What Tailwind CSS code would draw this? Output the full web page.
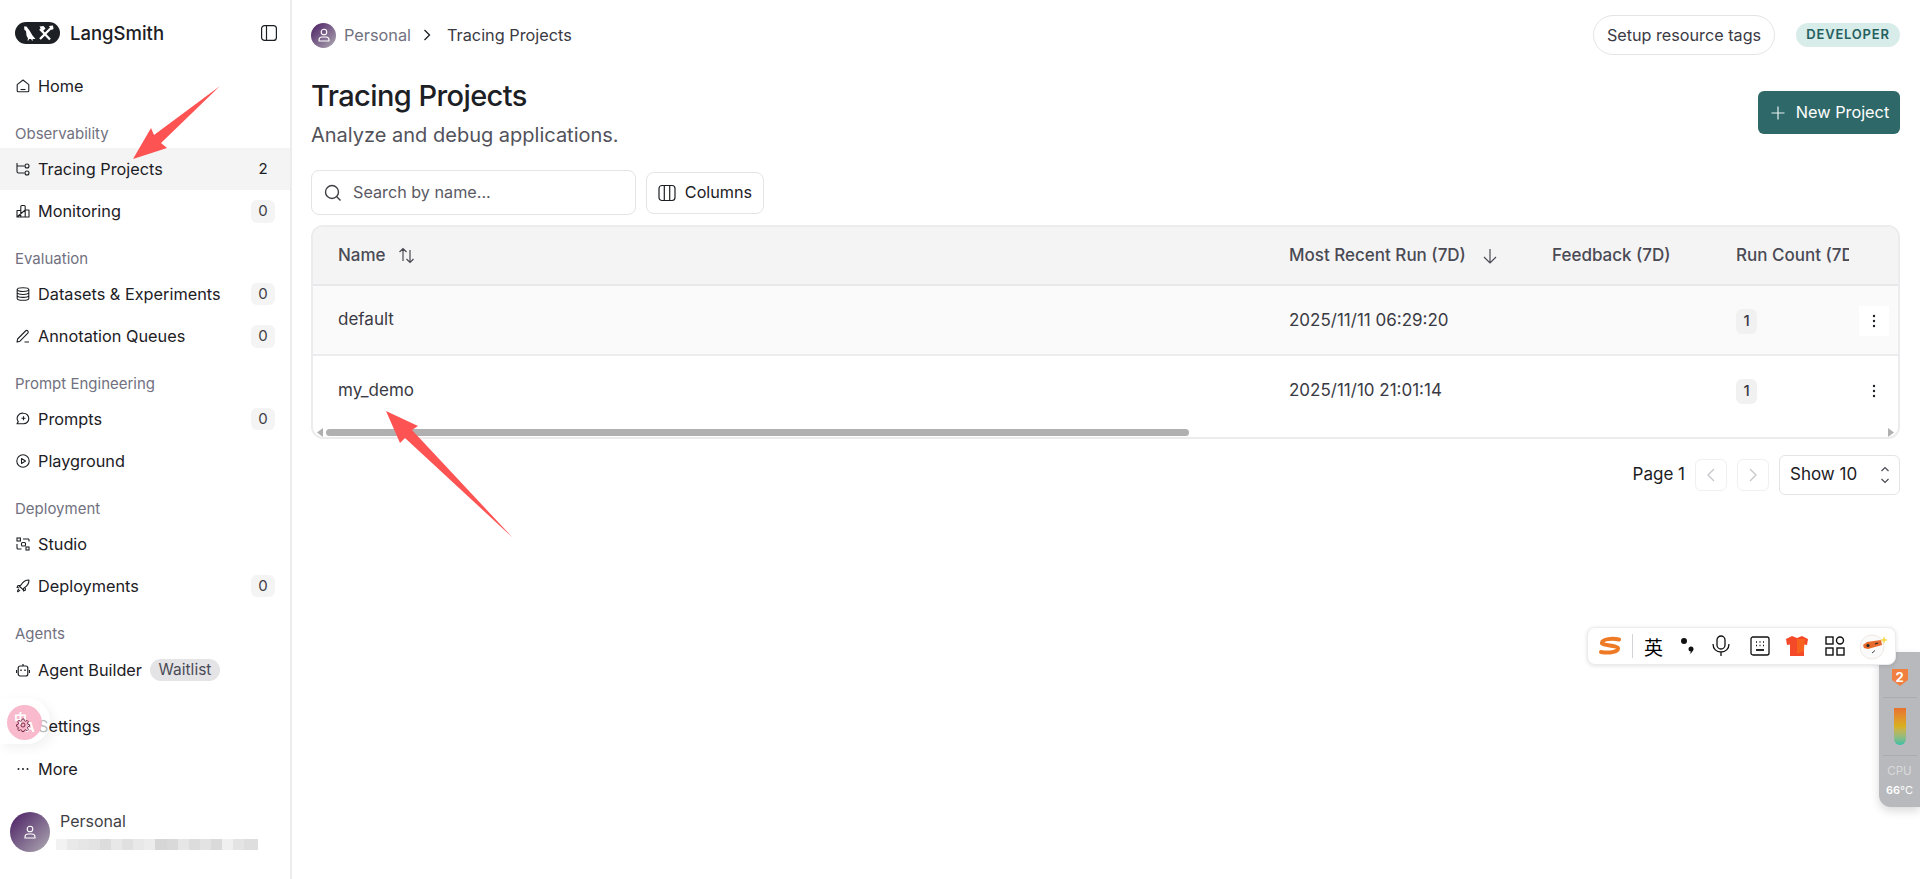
<!DOCTYPE html>
<html lang="en">
<head>
    <meta charset="UTF-8">
    <meta name="viewport" content="width=device-width, initial-scale=1.0">
    <title>LangSmith - Tracing Projects</title>
    <script src="https://cdn.jsdelivr.net/npm/@tailwindcss/browser@4"></script>
</head>
<body class="bg-white text-[#1c2024] font-['Inter','Liberation_Sans',sans-serif] overflow-hidden">
<div class="relative flex h-[879px] w-[1920px] overflow-hidden">

    <!-- Sidebar -->
    <aside class="w-[292px] shrink-0 h-full border-r-2 border-[#ececee] flex flex-col text-[16.3px] leading-5">
        <div class="h-[65px] flex items-center pl-[15px] pr-[13px]">
            <svg class="w-[45px] h-[22px]" viewBox="0 0 45 22">
                <rect width="45" height="22" rx="11" fill="#1c2024"/>
                <path d="M9 4.500l2.500 0 3 4 3 5 3 3.500h-3l.5 1.500h-1l-1-1.500h-2l-.5 1.500h-1l.5-2-1.500-3-.5-4.500-1.500-1z" fill="#fff"/>
                <path d="M25 7l10 10.500M36.500 5.500L25 17" stroke="#fff" stroke-width="2.300" fill="none"/>
                <path d="M24.500 4.500l4-.5 2 2.500-3 3zM34 4l4-.5.500 3.500-2 1z" fill="#fff"/>
            </svg>
            <span class="ml-[10px] text-[18.500px] font-medium">LangSmith</span>
            <svg class="ml-auto w-4 h-4" viewBox="0 0 16 16" fill="none" stroke="#1c2024" stroke-width="1.2"><rect x="0.6" y="0.6" width="14.8" height="14.8" rx="3"/><path d="M5.5 0.6v14.8"/></svg>
        </div>

        <a class="h-[42px] flex items-center pl-4 pr-[15px]">
            <svg class="w-[14px] h-[14px] mr-2" viewBox="0 0 14 14" fill="none" stroke="#1c2024" stroke-width="1.1" stroke-linejoin="round"><path d="M1.2 5.6L7 1l5.8 4.6v6.2a1 1 0 0 1-1 1H2.2a1 1 0 0 1-1-1z"/><path d="M4.5 10.5h5"/></svg>
            Home
        </a>

        <div class="h-[41px] pt-[17px] pl-[15px] text-[15px] text-[#71717f]">Observability</div>
        <a class="h-[42px] flex items-center pl-4 pr-[15px] bg-[#f4f4f4]">
            <svg class="w-[14px] h-[14px] mr-2" viewBox="0 0 14 14" fill="none" stroke="#1c2024" stroke-width="1.1"><path d="M1 1v8.5a1.5 1.5 0 0 0 1.5 1.5H8.5M1 4h7.500"/><circle cx="11" cy="4" r="2"/><circle cx="11" cy="11" r="2"/></svg>
            Tracing Projects
            <span class="ml-auto w-6 h-[22px] text-[15px] flex items-center justify-center">2</span>
        </a>
        <a class="h-[42px] flex items-center pl-4 pr-[15px]">
            <svg class="w-[14px] h-[14px] mr-2" viewBox="0 0 14 14" fill="none" stroke="#1c2024" stroke-width="1.1" stroke-linejoin="round"><path d="M1 13V6.500h3.800M4.800 13V2.500a1 1 0 0 1 1-1h2.400a1 1 0 0 1 1 1V13M9.200 6h3.800v7H1z"/></svg>
            Monitoring
            <span class="ml-auto w-6 h-[23px] rounded-md bg-[#f4f4f4] text-[15px] flex items-center justify-center text-[#3f3f46]">0</span>
        </a>

        <div class="h-[41px] pt-[17px] pl-[15px] text-[15px] text-[#71717f]">Evaluation</div>
        <a class="h-[42px] flex items-center pl-4 pr-[15px]">
            <svg class="w-[14px] h-[14px] mr-2" viewBox="0 0 14 14" fill="none" stroke="#1c2024" stroke-width="1.1"><ellipse cx="7" cy="2.600" rx="5.800" ry="1.900"/><path d="M1.200 2.600v8.800c0 1 2.600 1.900 5.800 1.900s5.800-.9 5.800-1.900V2.600M1.200 5.600c0 1 2.600 1.900 5.800 1.900s5.800-.9 5.800-1.900M1.200 8.500c0 1 2.600 1.900 5.800 1.900s5.800-.9 5.800-1.900"/></svg>
            Datasets &amp; Experiments
            <span class="ml-auto w-6 h-[22px] rounded-md bg-[#f4f4f4] text-[15px] flex items-center justify-center text-[#3f3f46]">0</span>
        </a>
        <a class="h-[42px] flex items-center pl-4 pr-[15px]">
            <svg class="w-[14px] h-[14px] mr-2" viewBox="0 0 14 14" fill="none" stroke="#1c2024" stroke-width="1.1" stroke-linejoin="round"><path d="M1 13l.6-3L9.500 2a1.500 1.500 0 0 1 2.300 2.200L4 12.200zM8.500 13H13"/></svg>
            Annotation Queues
            <span class="ml-auto w-6 h-[23px] rounded-md bg-[#f4f4f4] text-[15px] flex items-center justify-center text-[#3f3f46]">0</span>
        </a>

        <div class="h-[41px] pt-[17px] pl-[15px] text-[15px] text-[#71717f]">Prompt Engineering</div>
        <a class="h-[42px] flex items-center pl-4 pr-[15px]">
            <svg class="w-[14px] h-[14px] mr-2" viewBox="0 0 14 14" fill="none" stroke="#1c2024" stroke-width="1.1" stroke-linejoin="round"><path d="M7.500 1.200a5.300 5.300 0 0 1 0 10.600H1l1.300-2.200A5.300 5.300 0 0 1 7.500 1.200z"/><path d="M7.500 4.300v4M5.500 6.300h4"/></svg>
            Prompts
            <span class="ml-auto w-6 h-[22px] rounded-md bg-[#f4f4f4] text-[15px] flex items-center justify-center text-[#3f3f46]">0</span>
        </a>
        <a class="h-[42px] flex items-center pl-4 pr-[15px]">
            <svg class="w-[14px] h-[14px] mr-2" viewBox="0 0 14 14" fill="none" stroke="#1c2024" stroke-width="1.1" stroke-linejoin="round"><circle cx="7" cy="7" r="6.200"/><path d="M5.500 4.500l4 2.500-4 2.500z"/></svg>
            Playground
        </a>

        <div class="h-[41px] pt-[17px] pl-[15px] text-[15px] text-[#71717f]">Deployment</div>
        <a class="h-[42px] flex items-center pl-4 pr-[15px]">
            <svg class="w-[14px] h-[14px] mr-2" viewBox="0 0 14 14" fill="none" stroke="#1c2024" stroke-width="1.100"><rect x="1" y="1" width="3.400" height="3"/><path d="M7 2h5.500a1 1 0 0 1 .5 1v1.500M1 7v4a1 1 0 0 0 1 1h3.500"/><rect x="5.500" y="5.500" width="4" height="3.500" rx="1"/><rect x="10" y="10" width="3" height="3"/></svg>
            Studio
        </a>
        <a class="h-[42px] flex items-center pl-4 pr-[15px]">
            <svg class="w-[14px] h-[14px] mr-2" viewBox="0 0 14 14" fill="none" stroke="#1c2024" stroke-width="1.1" stroke-linejoin="round"><path d="M13 1c-3.500 0-6 1.500-8 5L3.300 7l3.700 3.700L8 9c3.500-2 5-4.500 5-8z"/><path d="M4.500 6.500H2L1 8.500l2.300.3M7.500 9.500V12l2-1-.3-2.300M3 10c-1 .5-1.500 2-1.500 2.500S3.500 12 4 11"/></svg>
            Deployments
            <span class="ml-auto w-6 h-[22px] rounded-md bg-[#f4f4f4] text-[15px] flex items-center justify-center text-[#3f3f46]">0</span>
        </a>

        <div class="h-[42px] pt-[17px] pl-[15px] text-[15px] text-[#71717f]">Agents</div>
        <a class="h-[42px] flex items-center pl-4 pr-[15px]">
            <svg class="w-[14px] h-[14px] mr-2" viewBox="0 0 14 14" fill="none" stroke="#1c2024" stroke-width="1.200"><rect x="2.200" y="3" width="9.600" height="10" rx="2"/><path d="M7 1v2M.5 7v3M13.500 7v3"/><path d="M5 6.500v1.500M9 6.500v1.500" stroke-width="1.400"/></svg>
            Agent Builder
            <span class="ml-2 h-[22px] w-[70px] rounded-full bg-[#e4e4e7] text-[15.5px] flex items-center justify-center text-[#4b4b55]">Waitlist</span>
        </a>

        <div class="h-[14px]"></div>
        <a class="h-[42px] flex items-center pl-4 pr-[15px]">
            <svg class="w-[14px] h-[14px] mr-2" viewBox="0 0 14 14" fill="none" stroke="#1c2024" stroke-width="1"><circle cx="7" cy="7" r="2"/><path d="M6 1h2l.3 1.700 1.300.6L11 2.300l1.400 1.400-1 1.400.6 1.300L13.500 6.700v1.600l-1.500.3-.6 1.300 1 1.400L11 12.700l-1.400-1-1.300.6L8 13.500H6l-.3-1.200-1.300-.6-1.400 1-1.400-1.400 1-1.400L2 9.100.5 8.300V6.700L2 6.400l.6-1.300-1-1.400L3 2.300l1.400 1 1.300-.6z"/></svg>
            Settings
        </a>
        <a class="h-[42px] flex items-center pl-4 pr-[15px] mt-[1px]">
            <svg class="w-[14px] h-[14px] mr-2" viewBox="0 0 14 14" fill="#1c2024"><circle cx="2.500" cy="7" r="1"/><circle cx="7" cy="7" r="1"/><circle cx="11.500" cy="7" r="1"/></svg>
            More
        </a>

        <div class="mt-[22px] pl-[10px] flex items-center">
            <div class="w-10 h-10 rounded-full bg-gradient-to-br from-[#4a1a62] to-[#b0acb2] flex items-center justify-center">
                <svg class="w-[14px] h-[14px]" viewBox="0 0 14 14" fill="none" stroke="#fff" stroke-width="1.100"><circle cx="7" cy="4" r="2.800"/><path d="M2 13v-1a3 3 0 0 1 3-3h4a3 3 0 0 1 3 3v1z"/></svg>
            </div>
            <div class="ml-[10px] relative -top-[11px]">
                <div class="text-[16px] text-[#3f3f46]">Personal</div>
            </div>
        </div>
    </aside>

    <!-- Main content -->
    <main class="flex-1 min-w-0 pl-[19px] pr-5">
        <div class="h-[70px] flex items-center">
            <div class="w-[25px] h-[25px] rounded-full bg-gradient-to-br from-[#4a1a62] to-[#b0acb2] flex items-center justify-center">
                <svg class="w-[14px] h-[14px]" viewBox="0 0 14 14" fill="none" stroke="#fff" stroke-width="1.100"><circle cx="7" cy="4" r="2.800"/><path d="M2 13v-1a3 3 0 0 1 3-3h4a3 3 0 0 1 3 3v1z"/></svg>
            </div>
            <span class="ml-2 text-[16.3px] text-[#71717f]">Personal</span>
            <svg class="ml-[10px] w-[12px] h-[12px]" viewBox="0 0 12 12" fill="none" stroke="#1c2024" stroke-width="1.300"><path d="M3.500 1l5 5-5 5"/></svg>
            <span class="ml-[14px] text-[16.3px] text-[#3a3a44]">Tracing Projects</span>
            <a class="ml-auto h-10 w-[182px] rounded-full border border-[#e4e4e7] text-[16.2px] text-[#3a3a44] flex items-center justify-center">Setup resource tags</a>
            <span class="ml-[21px] h-6 w-[104px] rounded-full bg-[#d8ecea] text-[#25605f] text-[13px] font-semibold tracking-[0.06em] flex items-center justify-center -mt-[1px]">DEVELOPER</span>
        </div>

        <div class="flex items-start h-[100px]">
            <div>
                <h1 class="text-[29px] leading-9 font-medium tracking-[-0.02em] mt-[8px] text-[#1c2024]">Tracing Projects</h1>
                <p class="text-[20px] leading-7 mt-[7px] text-[#52525b]">Analyze and debug applications.</p>
            </div>
            <button class="ml-auto mt-[21px] h-[43px] w-[142px] rounded-md bg-[#2f6868] text-white text-[16.3px] flex items-center justify-center gap-[11px] pl-[2px]">
                <svg class="w-[14px] h-[14px]" viewBox="0 0 14 14" fill="none" stroke="#e6f0f0" stroke-width="1.200"><path d="M7 .5v13M.5 7h13"/></svg>
                New Project
            </button>
        </div>

        <div class="flex items-center h-[45px] gap-[10px]">
            <div class="w-[325px] h-[45px] rounded-lg border border-[#e4e4e7] flex items-center pl-3">
                <svg class="w-[18px] h-[18px]" viewBox="0 0 18 18" fill="none" stroke="#3f3f46" stroke-width="1.400"><circle cx="8" cy="8" r="6.500"/><path d="M12.800 12.800L16.500 16.500"/></svg>
                <span class="ml-[11px] text-[16.2px] text-[#5a5a64]">Search by name...</span>
            </div>
            <button class="w-[118px] h-[42px] rounded-lg border border-[#e4e4e7] flex items-center justify-center text-[16.2px] text-[#1c2024]">
                <svg class="w-[18px] h-[18px] mr-[9px]" viewBox="0 0 18 18" fill="none" stroke="#1c2024" stroke-width="1.200"><rect x="1" y="1.500" width="16" height="15" rx="3"/><path d="M6.300 1.500v15M11.700 1.500v15"/></svg>
                Columns
            </button>
        </div>

        <!-- Table -->
        <div class="mt-[10px] w-[1589px] h-[214px] rounded-xl border-2 border-[#ececee] overflow-hidden text-[17px]">
            <div class="h-[59px] bg-[#f4f4f4] border-b-2 border-[#e8e8ea] flex items-center font-medium text-[#4a4a54]">
                <div class="w-[976px] pl-[25px] flex items-center">
                    Name
                    <svg class="ml-3 w-[17px] h-[17px]" viewBox="0 0 17 17" fill="none" stroke="#4a4a54" stroke-width="1.200"><path d="M5 14V1.500M1.500 5L5 1.500 8.500 5M12 3v12.500M8.500 12l3.500 3.500 3.500-3.500"/></svg>
                </div>
                <div class="w-[263px] flex items-center">
                    Most Recent Run (7D)
                    <svg class="ml-[16px] w-4 h-4" viewBox="0 0 16 16" fill="none" stroke="#4a4a54" stroke-width="1.200"><path d="M8 1v14M2 9l6 6 6-6"/></svg>
                </div>
                <div class="w-[184px]">Feedback (7D)</div>
                <div class="w-[113px] overflow-hidden whitespace-nowrap">Run Count (7D)</div>
            </div>
            <div class="h-[70px] pt-[2px] bg-[#fafafa] border-b-2 border-[#ececee] flex items-center text-[#3a3a44]">
                <div class="w-[976px] pl-[25px] -mt-[2px]">default</div>
                <div class="w-[263px]">2025/11/11 06:29:20</div>
                <div class="w-[184px]"></div>
                <div class="w-[123px]"><span class="w-[21px] h-[25px] rounded-md bg-[#f1f1f2] flex items-center justify-center text-[15px] font-medium">1</span></div>
                <div class="w-[30px] h-[30px] bg-white flex items-center justify-center">
                    <svg class="w-1 h-[14px]" viewBox="0 0 4 14" fill="#1c2024"><circle cx="2" cy="2" r="1.200"/><circle cx="2" cy="7" r="1.200"/><circle cx="2" cy="12" r="1.200"/></svg>
                </div>
            </div>
            <div class="h-[70px] flex items-center text-[#3a3a44]">
                <div class="w-[976px] pl-[25px]">my_demo</div>
                <div class="w-[263px]">2025/11/10 21:01:14</div>
                <div class="w-[184px]"></div>
                <div class="w-[123px]"><span class="w-[21px] h-[25px] rounded-md bg-[#f1f1f2] flex items-center justify-center text-[15px] font-medium">1</span></div>
                <div class="w-[30px] h-[30px] flex items-center justify-center">
                    <svg class="w-1 h-[14px]" viewBox="0 0 4 14" fill="#1c2024"><circle cx="2" cy="2" r="1.200"/><circle cx="2" cy="7" r="1.200"/><circle cx="2" cy="12" r="1.200"/></svg>
                </div>
            </div>
            <!-- horizontal scrollbar -->
            <div class="h-[13px] flex items-center pl-[4px] pr-[4px]">
                <svg class="w-[6px] h-[9px]" viewBox="0 0 6 9" fill="#b0b0b0"><path d="M6 0v9L0 4.500z"/></svg>
                <div class="ml-[3px] w-[863px] h-[7px] rounded-full bg-[#b0b0b0]"></div>
                <svg class="ml-auto w-[6px] h-[9px]" viewBox="0 0 6 9" fill="#b0b0b0"><path d="M0 0v9l6-4.500z"/></svg>
            </div>
        </div>

        <!-- Pagination -->
        <div class="w-[1589px] mt-[16px] flex items-center justify-end text-[17px] text-[#1c2024]">
            <span>Page 1</span>
            <button class="ml-[10px] w-[32px] h-[32px] rounded-md border border-[#f0f0f1] flex items-center justify-center">
                <svg class="w-[10px] h-4" viewBox="0 0 10 16" fill="none" stroke="#c4c4c8" stroke-width="1.200"><path d="M8 2L2 8l6 6"/></svg>
            </button>
            <button class="ml-[10px] w-[32px] h-[32px] rounded-md border border-[#f0f0f1] flex items-center justify-center">
                <svg class="w-[10px] h-4" viewBox="0 0 10 16" fill="none" stroke="#c4c4c8" stroke-width="1.200"><path d="M2 2l6 6-6 6"/></svg>
            </button>
            <div class="ml-[10px] w-[121px] h-10 rounded-md border border-[#e4e4e7] flex items-center pl-[10px] pr-[9px]">
                Show 10
                <svg class="ml-auto w-[10px] h-[18px]" viewBox="0 0 10 18" fill="none" stroke="#4a4a54" stroke-width="1.200"><path d="M1.500 5L5 1.500 8.500 5M1.500 13L5 16.500 8.500 13"/></svg>
            </div>
        </div>
    </main>

    <!-- Red annotation arrows, drawn on top of the screenshot -->
    <svg class="absolute left-0 top-0 w-[1920px] h-[879px] pointer-events-none" viewBox="0 0 1920 879" fill="#fd5353">
        <path d="M220 86L154 135 151 128 133 159 167 148 161 143z"/>
        <path d="M386 411L418 426 412 430 513 538 405 438 400 443z"/>
    </svg>

    <!-- Pixelated (redacted) email under Personal -->
    <div class="absolute left-[56px] top-[839px] flex h-[11px]">
        <div class="w-[11px] bg-[#f2f2f2]"></div><div class="w-[11px] bg-[#e9e9e9]"></div><div class="w-[11px] bg-[#e6e6e6]"></div><div class="w-[11px] bg-[#e3e3e3]"></div><div class="w-[11px] bg-[#dcdcdc]"></div><div class="w-[11px] bg-[#e8e8e8]"></div><div class="w-[11px] bg-[#e0e0e0]"></div><div class="w-[11px] bg-[#e8e8e8]"></div><div class="w-[11px] bg-[#ececec]"></div><div class="w-[12px] bg-[#d6d6d6]"></div><div class="w-[11px] bg-[#d9d9d9]"></div><div class="w-[11px] bg-[#e6e6e6]"></div><div class="w-[11px] bg-[#dcdcdc]"></div><div class="w-[11px] bg-[#e3e3e3]"></div><div class="w-[11px] bg-[#dadada]"></div><div class="w-[11px] bg-[#f0f0f0]"></div><div class="w-[11px] bg-[#e4e4e4]"></div><div class="w-[14px] bg-[#dedede]"></div>
    </div>

    <!-- Floating translate widget over Settings -->
    <div class="absolute left-0 top-[698px] w-[50px] h-[46px] rounded-r-full bg-white/70 shadow-[4px_4px_12px_rgba(0,0,0,0.06)]">
        <div class="absolute left-[7px] top-[7px] w-[35px] h-[35px] rounded-full bg-[#f7b3c7]/90 text-white text-[13px] font-bold leading-none font-['Noto_Sans_CJK_SC',sans-serif]">
            <span class="absolute left-[7px] top-[6px]">中</span><span class="absolute left-[19px] top-[15px]">A</span>
        </div>
        <svg class="absolute left-[16px] top-[20px] w-[14px] h-[14px]" viewBox="0 0 14 14" fill="none" stroke="#7c2d4a" stroke-width="1"><circle cx="7" cy="7" r="2"/><path d="M6 1h2l.3 1.700 1.300.6L11 2.300l1.400 1.400-1 1.400.6 1.300L13.500 6.700v1.600l-1.500.3-.6 1.300 1 1.400L11 12.700l-1.400-1-1.300.6L8 13.500H6l-.3-1.200-1.300-.6-1.400 1-1.400-1.400 1-1.400L2 9.100.5 8.300V6.700L2 6.400l.6-1.300-1-1.400L3 2.300l1.400 1 1.300-.6z"/></svg>
    </div>

    <!-- CPU temperature widget -->
    <div class="absolute right-0 top-[652px] w-[41px] h-[155px] rounded-l-xl bg-[#b8b9bc] shadow-[0_4px_10px_rgba(0,0,0,0.15)] flex flex-col items-center">
        <svg class="mt-[16px] w-4 h-[18px]" viewBox="0 0 16 18"><path d="M0 1h16v11l-8 6-8-6z" fill="#f08040"/></svg>
        <span class="absolute top-[15px] text-[13px] font-bold text-white leading-5">2</span>
        <div class="mt-[11px] w-[34px] h-px bg-[#a9acb0]"></div>
        <div class="mt-[10px] w-3 h-[37px] rounded-b-full bg-gradient-to-b from-[#e8702f] via-[#d8b020] to-[#30c0a8]"></div>
        <div class="mt-[10px] w-[34px] h-px bg-[#a9acb0]"></div>
        <span class="mt-[8px] text-[11.500px] leading-[14px] text-[#d8d9dc]">CPU</span>
        <span class="mt-[5px] text-[11px] leading-[14px] text-white"><b class="font-semibold">66</b>°C</span>
    </div>

    <!-- IME toolbar -->
    <div class="absolute left-[1587px] top-[627px] w-[309px] h-[38px] rounded-lg bg-white border border-[#ececee] shadow-[0_1px_4px_rgba(0,0,0,0.12)] flex items-center pl-[10px]">
        <svg class="w-6 h-5" viewBox="0 0 24 20" fill="none" stroke="#ee7a26" stroke-width="4" stroke-linecap="round"><path d="M21 3.500C14 2 5 3 4 6.500s16 2.500 16 6-9 5-17 3.500"/></svg>
        <div class="ml-[10px] w-px h-6 bg-[#d4d4d8]"></div>
        <span class="ml-[11px] w-[20px] text-[19px] leading-none text-black font-['Noto_Sans_CJK_SC',sans-serif]">英</span>
        <svg class="ml-[16px] w-[14px] h-5" viewBox="0 0 14 20" fill="#111"><circle cx="4" cy="5" r="3"/><circle cx="11" cy="13" r="2.500"/><path d="M12.500 13c.5 2.500-1 4.500-3 5 1-1 1.500-2.500 1.500-4z"/></svg>
        <svg class="ml-[18px] w-[18px] h-[22px]" viewBox="0 0 18 22" fill="none" stroke="#111" stroke-width="1.300"><rect x="5" y="1" width="8" height="13" rx="4"/><path d="M1 9c0 5 3.500 8 8 8s8-3 8-8M9 17v4"/></svg>
        <svg class="ml-[20px] w-5 h-5" viewBox="0 0 20 20" fill="none" stroke="#111" stroke-width="1.300"><rect x="1" y="1" width="18" height="18" rx="2"/><path d="M6 14h8" stroke-width="1.800"/><path d="M6 6h1M9.500 6h1M13 6h1M6 9.500h1M9.500 9.500h1M13 9.500h1"/></svg>
        <svg class="ml-[16px] w-[22px] h-5" viewBox="0 0 22 20"><path d="M6 0l5 2 5-2 6 3-1 6-3-.5V20H4V8.500L1 9 0 3z" fill="#f44a2a"/><path d="M11 3l8 0-1 12-7 3z" fill="#f97316" opacity=".6"/></svg>
        <svg class="ml-[17px] w-5 h-5" viewBox="0 0 20 20" fill="none" stroke="#111" stroke-width="1.400"><rect x="1" y="1" width="7" height="7"/><circle cx="15" cy="4.500" r="3.500"/><rect x="1" y="12" width="7" height="7"/><rect x="12" y="12" width="7" height="7"/></svg>
        <svg class="ml-[15px] w-7 h-7" viewBox="0 0 28 28"><circle cx="12" cy="15" r="12" fill="#fbfafa" stroke="#f0e8e4"/><path d="M3 13l4-3 14-2 1 5-14 4-4-1z" fill="#e66a2c"/><circle cx="8" cy="13.500" r="1.500" fill="#222"/><path d="M15 12l3-1" stroke="#222" stroke-width="1.300"/><path d="M12 21l3-2.500" stroke="#444"/><path d="M24 4l1 3 3 1-3 1-1 3-1-3-3-1 3-1z" fill="#f7d84a"/></svg>
    </div>
</div>
</body>
</html>
